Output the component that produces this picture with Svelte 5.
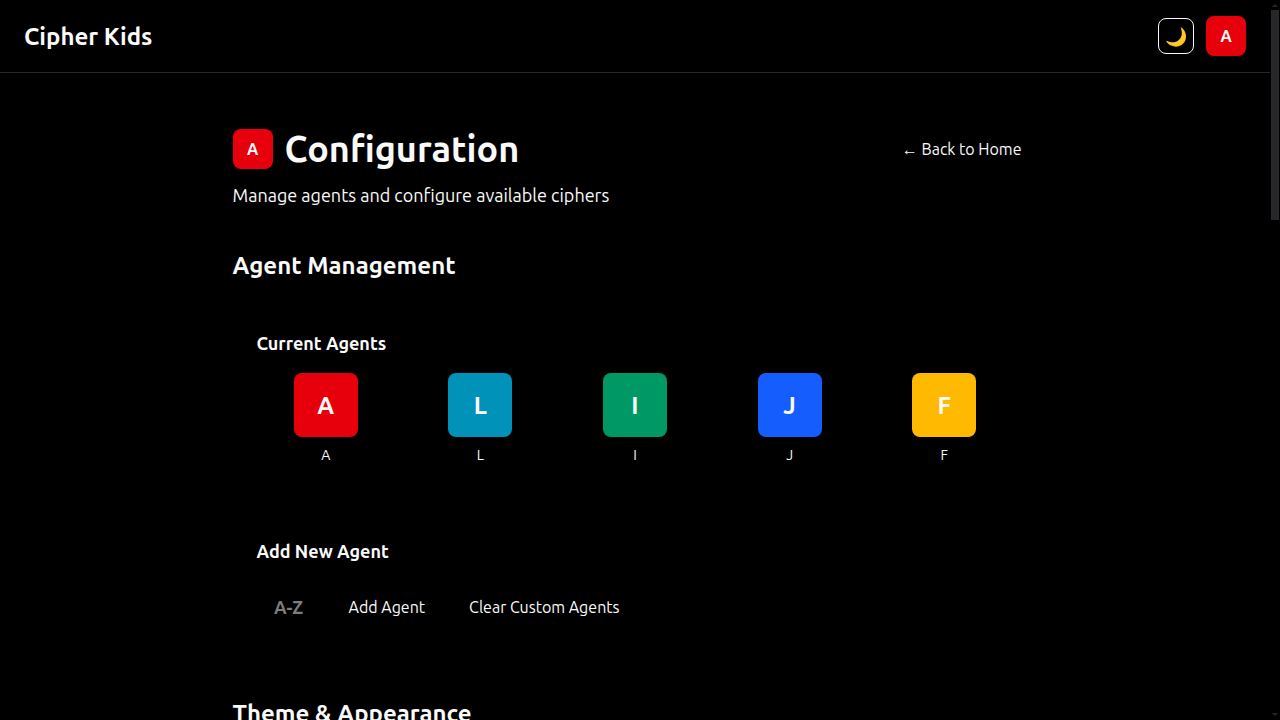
<script>
  const agents = [
    { letter: 'A', color: '#e7000b' },
    { letter: 'L', color: '#0092b8' },
    { letter: 'I', color: '#009966' },
    { letter: 'J', color: '#155dfc' },
    { letter: 'F', color: '#ffb900' }
  ];
  let initial = $state('');
</script>

<div class="shell">
  <div class="page">
    <header>
      <a class="brand" href="#home">Cipher Kids</a>
      <div class="tools">
        <button class="theme" aria-label="Switch theme">🌙</button>
        <button class="avatar">A</button>
      </div>
    </header>

    <main>
      <div class="intro">
        <div class="title">
          <span class="avatar">A</span>
          <h1>Configuration</h1>
        </div>
        <a class="back" href="#home">← Back to Home</a>
      </div>
      <p class="lead">Manage agents and configure available ciphers</p>

      <section>
        <h2>Agent Management</h2>
        <div class="card">
          <h3>Current Agents</h3>
          <ul class="agents">
            {#each agents as agent}
              <li>
                <span class="tile" style="background: {agent.color}">{agent.letter}</span>
                <span class="name">{agent.letter}</span>
              </li>
            {/each}
          </ul>
        </div>
        <div class="card">
          <h3>Add New Agent</h3>
          <form onsubmit={(event) => event.preventDefault()}>
            <input aria-label="Agent initial" placeholder="A-Z" maxlength="1" bind:value={initial} />
            <button>Add Agent</button>
            <button type="button">Clear Custom Agents</button>
          </form>
        </div>
      </section>

      <section>
        <h2>Theme &amp; Appearance</h2>
      </section>
    </main>
  </div>

  <div class="scrollbar" aria-hidden="true">
    <svg viewBox="0 0 10 10" width="10" height="10"><path d="M2 7L5 4L8 7Z" /></svg>
    <div class="track"><div class="thumb"></div></div>
    <svg viewBox="0 0 10 10" width="10" height="10"><path d="M2 3L5 6L8 3Z" /></svg>
  </div>
</div>

<style>
  :global(body) {
    background: #000;
  }
  .shell {
    display: flex;
    height: 100vh;
    overflow: hidden;
    background: #000;
    color: #fafafa;
    font-family: Ubuntu, 'Open Sans', sans-serif;
    font-size: 16px;
    font-weight: 400;
    line-height: 24px;
  }
  .page {
    flex: 1;
    min-width: 0;
    overflow: hidden;
  }
  h1,
  h2,
  h3,
  p,
  ul {
    margin: 0;
    padding: 0;
  }
  a {
    color: inherit;
    text-decoration: none;
  }
  button,
  input {
    font: inherit;
    color: inherit;
    background: transparent;
    border: 0;
    margin: 0;
    box-sizing: border-box;
  }
  header {
    display: flex;
    align-items: center;
    justify-content: space-between;
    padding: 16px 24px;
    border-bottom: 1px solid #27272a;
  }
  .brand {
    font-size: 24px;
    line-height: 27px;
    font-weight: 600;
  }
  .tools {
    display: flex;
    align-items: center;
    gap: 12px;
  }
  .theme {
    display: grid;
    place-items: center;
    width: 36px;
    height: 36px;
    padding: 0;
    border: 1px solid #fafafa;
    border-radius: 8px;
    font-size: 18px;
    line-height: 28px;
  }
  .avatar {
    display: grid;
    place-items: center;
    width: 40px;
    height: 40px;
    padding: 0;
    border-radius: 8px;
    background: #e7000b;
    font-weight: 600;
  }
  main {
    max-width: 805px;
    margin: 0 auto;
    padding: 56px 24px 0;
  }
  .intro,
  .title {
    display: flex;
    align-items: center;
  }
  .intro {
    justify-content: space-between;
  }
  .title {
    gap: 12px;
  }
  h1 {
    font-size: 36px;
    line-height: 40px;
    font-weight: 600;
  }
  .back {
    padding: 8px 16px;
  }
  .lead {
    margin-top: 12px;
    font-size: 18px;
    line-height: 28px;
  }
  section {
    margin-top: 40px;
  }
  h2 {
    margin-bottom: 22px;
    font-size: 24px;
    line-height: 34px;
    font-weight: 600;
  }
  h3 {
    font-size: 18px;
    line-height: 28px;
    font-weight: 600;
  }
  .card {
    padding: 24px;
  }
  .card + .card {
    margin-top: 24px;
  }
  .agents {
    display: grid;
    grid-template-columns: repeat(5, 1fr);
    gap: 16px;
    margin-top: 16px;
    list-style: none;
  }
  li {
    display: flex;
    flex-direction: column;
    align-items: center;
    gap: 8px;
  }
  .tile {
    display: grid;
    place-items: center;
    width: 64px;
    height: 64px;
    border-radius: 8px;
    font-size: 24px;
    line-height: 27px;
    font-weight: 600;
  }
  .name {
    font-size: 14px;
    line-height: 20px;
  }
  form {
    display: flex;
    align-items: center;
    gap: 12px;
    margin-top: 16px;
  }
  form button {
    padding: 8px 16px;
  }
  input {
    width: 64px;
    height: 52px;
    padding: 0;
    text-align: center;
    font-size: 18px;
    font-weight: 600;
  }
  input::placeholder {
    color: #7d7d7d;
    opacity: 1;
  }
  .scrollbar {
    display: flex;
    flex-direction: column;
    width: 10px;
  }
  .scrollbar path {
    fill: #27272a;
  }
  .scrollbar svg {
    display: block;
  }
  .track {
    flex: 1;
    padding: 0 1px;
  }
  .thumb {
    height: 30%;
    background: #27272a;
  }
</style>
